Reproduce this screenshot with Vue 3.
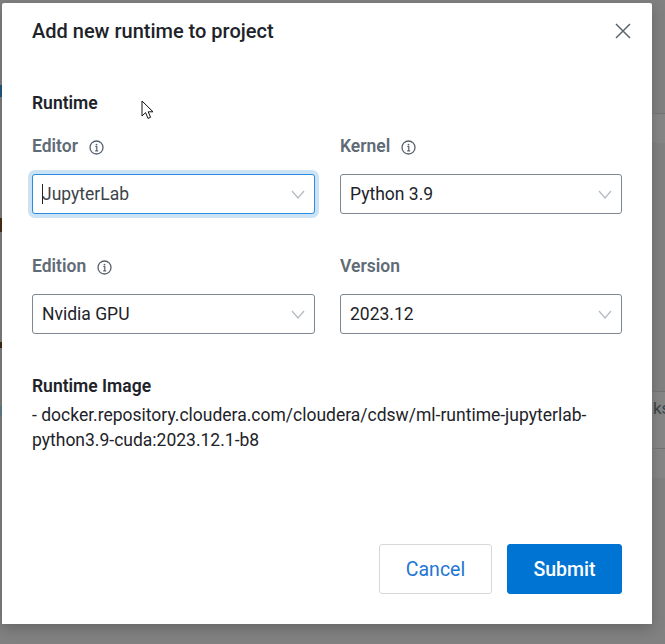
<script setup>
const fields = [
  { label: 'Editor', value: 'JupyterLab', info: true, focused: true },
  { label: 'Kernel', value: 'Python 3.9', info: true },
  { label: 'Edition', value: 'Nvidia GPU', info: true },
  { label: 'Version', value: '2023.12', info: false }
]
</script>

<template>
  <div class="backdrop">
    <!-- bits of the page behind the dialog -->
    <i class="sliver line" style="top: 113px"></i>
    <i class="sliver band" style="top: 113px; height: 30px"></i>
    <i class="sliver line" style="top: 391px"></i>
    <i class="sliver line" style="top: 448px"></i>
    <i class="sliver band" style="top: 391px; height: 87px"></i>
    <span class="behind-text">ks</span>
    <i class="edge" style="top: 85px; height: 12px; background: #24597f"></i>
    <i class="edge" style="top: 218px; height: 14px; background: #4a2f14"></i>
    <i class="edge" style="top: 342px; height: 6px; background: #3d2a12"></i>
    <i class="edge" style="top: 406px; height: 10px; background: #64808c"></i>

    <div class="modal">
      <div class="modal-header">
        <h2 class="title">Add new runtime to project</h2>
        <svg class="close" width="16" height="16" viewBox="0 0 16 16">
          <path d="M1 1 15 15M15 1 1 15" stroke="#5b6770" stroke-width="1.5" fill="none" />
        </svg>
      </div>

      <div class="section-title">Runtime</div>

      <div class="form-grid">
        <div v-for="f in fields" :key="f.label" class="field">
          <div class="field-label">
            <span>{{ f.label }}</span>
            <svg v-if="f.info" class="info" width="15" height="15" viewBox="0 0 15 15">
              <circle cx="7.5" cy="7.5" r="6.5" stroke="#56626d" stroke-width="1.3" fill="none" />
              <circle cx="7.5" cy="4.6" r="0.95" fill="#56626d" />
              <path d="M6.3 6.7H7.8V10.6M6.2 10.9H9.2" stroke="#56626d" stroke-width="1.2" fill="none" />
            </svg>
          </div>
          <div class="select" :class="{ focused: f.focused }">
            <span v-if="f.focused" class="caret"></span>
            <span class="select-value">{{ f.value }}</span>
            <svg class="chevron" width="14" height="9" viewBox="0 0 14 9">
              <path d="M1 1 7 8 13 1" stroke="#b4bac0" stroke-width="1.2" fill="none" />
            </svg>
          </div>
        </div>
      </div>

      <div class="image-title">Runtime Image</div>
      <div class="image-text">- docker.repository.cloudera.com/cloudera/cdsw/ml-runtime-jupyterlab-<br />python3.9-cuda:2023.12.1-b8</div>

      <div class="actions">
        <button class="btn btn-cancel">Cancel</button>
        <button class="btn btn-submit">Submit</button>
      </div>
    </div>

    <svg class="cursor" width="13" height="20" viewBox="0 0 13 20">
      <path d="M1 1V16L4.6 12.6 7 18.4 9.6 17.3 7.2 11.8H12Z" fill="#fff" stroke="#111" stroke-width="1" stroke-linejoin="round" />
    </svg>
  </div>
</template>

<style scoped>
.backdrop {
  position: relative;
  width: 665px;
  height: 644px;
  box-sizing: border-box;
  padding: 3px 13px 20px 2px;
  background: #808180;
  overflow: hidden;
  font-family: Roboto, "Liberation Sans", sans-serif;
}

.sliver {
  position: absolute;
  right: 0;
  width: 13px;
}

.line {
  height: 1px;
  background: #6f706f;
  z-index: 1;
}

.band {
  background: #858685;
}

.behind-text {
  position: absolute;
  left: 653px;
  top: 398px;
  font-size: 17px;
  color: #3f4347;
}

.edge {
  position: absolute;
  left: 0;
  width: 2px;
}

.modal {
  position: relative;
  display: flex;
  flex-direction: column;
  height: 100%;
  box-sizing: border-box;
  padding: 0 30px 30px 30px;
  background: #fff;
  border-radius: 2px 2px 0 0;
  box-shadow: 0 4px 14px rgba(0, 0, 0, 0.22);
}

.modal-header {
  display: flex;
  justify-content: space-between;
  align-items: center;
  height: 56px;
}

.title {
  margin: 0;
  font-size: 20px;
  font-weight: 500;
  color: #1d2329;
}

.close {
  margin-right: -9px;
}

.section-title {
  margin-top: 34px;
  font-size: 17.5px;
  line-height: 20px;
  font-weight: 600;
  color: #1d2329;
}

.form-grid {
  display: grid;
  grid-template-columns: 283px 282px;
  column-gap: 25px;
  row-gap: 41px;
  margin-top: 22px;
}

.field-label {
  display: flex;
  align-items: center;
  gap: 11px;
  height: 22px;
  margin-bottom: 17px;
  font-size: 17.5px;
  font-weight: 600;
  color: #5f6b76;
}

.info {
  margin-top: 3px;
}

.select {
  position: relative;
  display: flex;
  align-items: center;
  justify-content: space-between;
  box-sizing: border-box;
  height: 40px;
  padding: 0 9px;
  background: #fff;
  border: 1px solid #7c8791;
  border-radius: 3px;
  font-size: 17.5px;
  color: #1d2329;
}

.select.focused {
  border-color: #2a8ce0;
  box-shadow: 0 0 0 4px #cce2f5;
  color: #3d4449;
}

.caret {
  position: absolute;
  left: 9px;
  top: 9px;
  width: 1px;
  height: 20px;
  background: #1d2329;
}

.image-title {
  margin-top: 42px;
  font-size: 17.5px;
  line-height: 20px;
  font-weight: 600;
  color: #1d2329;
}

.image-text {
  margin-top: 7px;
  font-size: 17.5px;
  line-height: 25px;
  color: #1d2329;
  white-space: nowrap;
}

.actions {
  display: flex;
  justify-content: flex-end;
  gap: 15px;
  margin-top: auto;
}

.btn {
  box-sizing: border-box;
  height: 50px;
  border-radius: 3px;
  font-family: inherit;
  font-size: 19.5px;
}

.btn-cancel {
  width: 113px;
  background: #fff;
  border: 1px solid #d6d9dc;
  color: #1f76d2;
}

.btn-submit {
  width: 115px;
  background: #0074d2;
  border: 1px solid #0074d2;
  color: #fff;
  font-weight: 500;
}

.cursor {
  position: absolute;
  left: 141px;
  top: 100px;
}
</style>
